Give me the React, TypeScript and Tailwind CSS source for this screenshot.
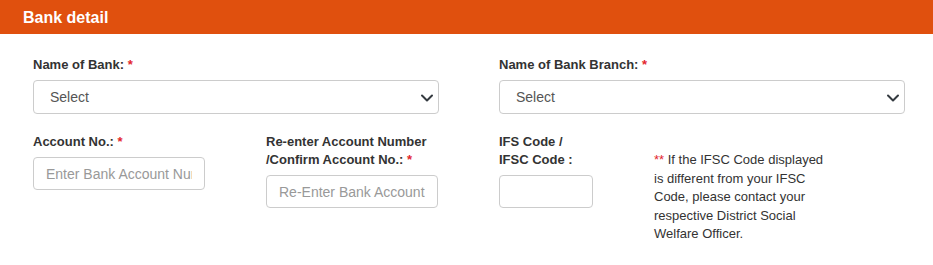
import React from "react";

const Req = () => <span className="text-[#e3262d]">*</span>;

const SelectBox = () => (
  <div className="relative">
    <select className="w-full h-[34px] appearance-none rounded-[4px] border border-[#cccccc] bg-white pl-4 pr-8 text-[14px] text-[#555555] outline-none">
      <option>Select</option>
    </select>
    <svg
      className="pointer-events-none absolute right-[4px] top-[12px]"
      width="16"
      height="12"
      viewBox="0 0 16 12"
      fill="none"
    >
      <path d="M3 3.5l5 5 5-5" stroke="#343a40" strokeWidth="2" strokeLinecap="round" strokeLinejoin="round" />
    </svg>
  </div>
);

const Label = ({ children }: { children: React.ReactNode }) => (
  <label className="block mb-[6px] text-[13px] leading-[18px] font-bold text-[#333333]">{children}</label>
);

const inputCls =
  "h-[33px] rounded-[4px] border border-[#cccccc] bg-white px-3 text-[14px] text-[#555555] placeholder:text-[#999999] outline-none";

export default function App() {
  return (
    <div className="w-[933px] h-[265px] bg-white font-['Liberation_Sans',Arial,sans-serif]">
      <div className="h-[34px] bg-[#e0500e] pl-[23px] pt-[1px] flex items-center">
        <h2 className="text-white text-[16px] font-bold leading-none">Bank detail</h2>
      </div>

      <div className="pl-[33px] pt-[22px]">
        <div className="flex gap-[60px]">
          <div className="w-[406px]">
            <Label>
              Name of Bank: <Req />
            </Label>
            <SelectBox />
          </div>
          <div className="w-[406px]">
            <Label>
              Name of Bank Branch: <Req />
            </Label>
            <SelectBox />
          </div>
        </div>

        <div className="flex gap-[61px] mt-[19px]">
          <div className="w-[172px]">
            <Label>
              Account No.: <Req />
            </Label>
            <input className={`${inputCls} w-[172px]`} placeholder="Enter Bank Account Number" />
          </div>
          <div className="w-[172px]">
            <Label>
              Re-enter Account Number
              <br />
              /Confirm Account No.: <Req />
            </Label>
            <input className={`${inputCls} w-[172px]`} placeholder="Re-Enter Bank Account Number" />
          </div>
          <div className="w-[94px]">
            <Label>
              IFS Code /
              <br />
              IFSC Code :
            </Label>
            <input className={`${inputCls} w-[94px]`} />
          </div>
          <p className="w-[180px] mt-[18px] text-[13px] leading-[18.5px] text-[#333333]">
            <span className="text-[#e3262d]">**</span> If the IFSC Code displayed is different from your IFSC Code,
            please contact your respective District Social Welfare Officer.
          </p>
        </div>
      </div>
    </div>
  );
}
